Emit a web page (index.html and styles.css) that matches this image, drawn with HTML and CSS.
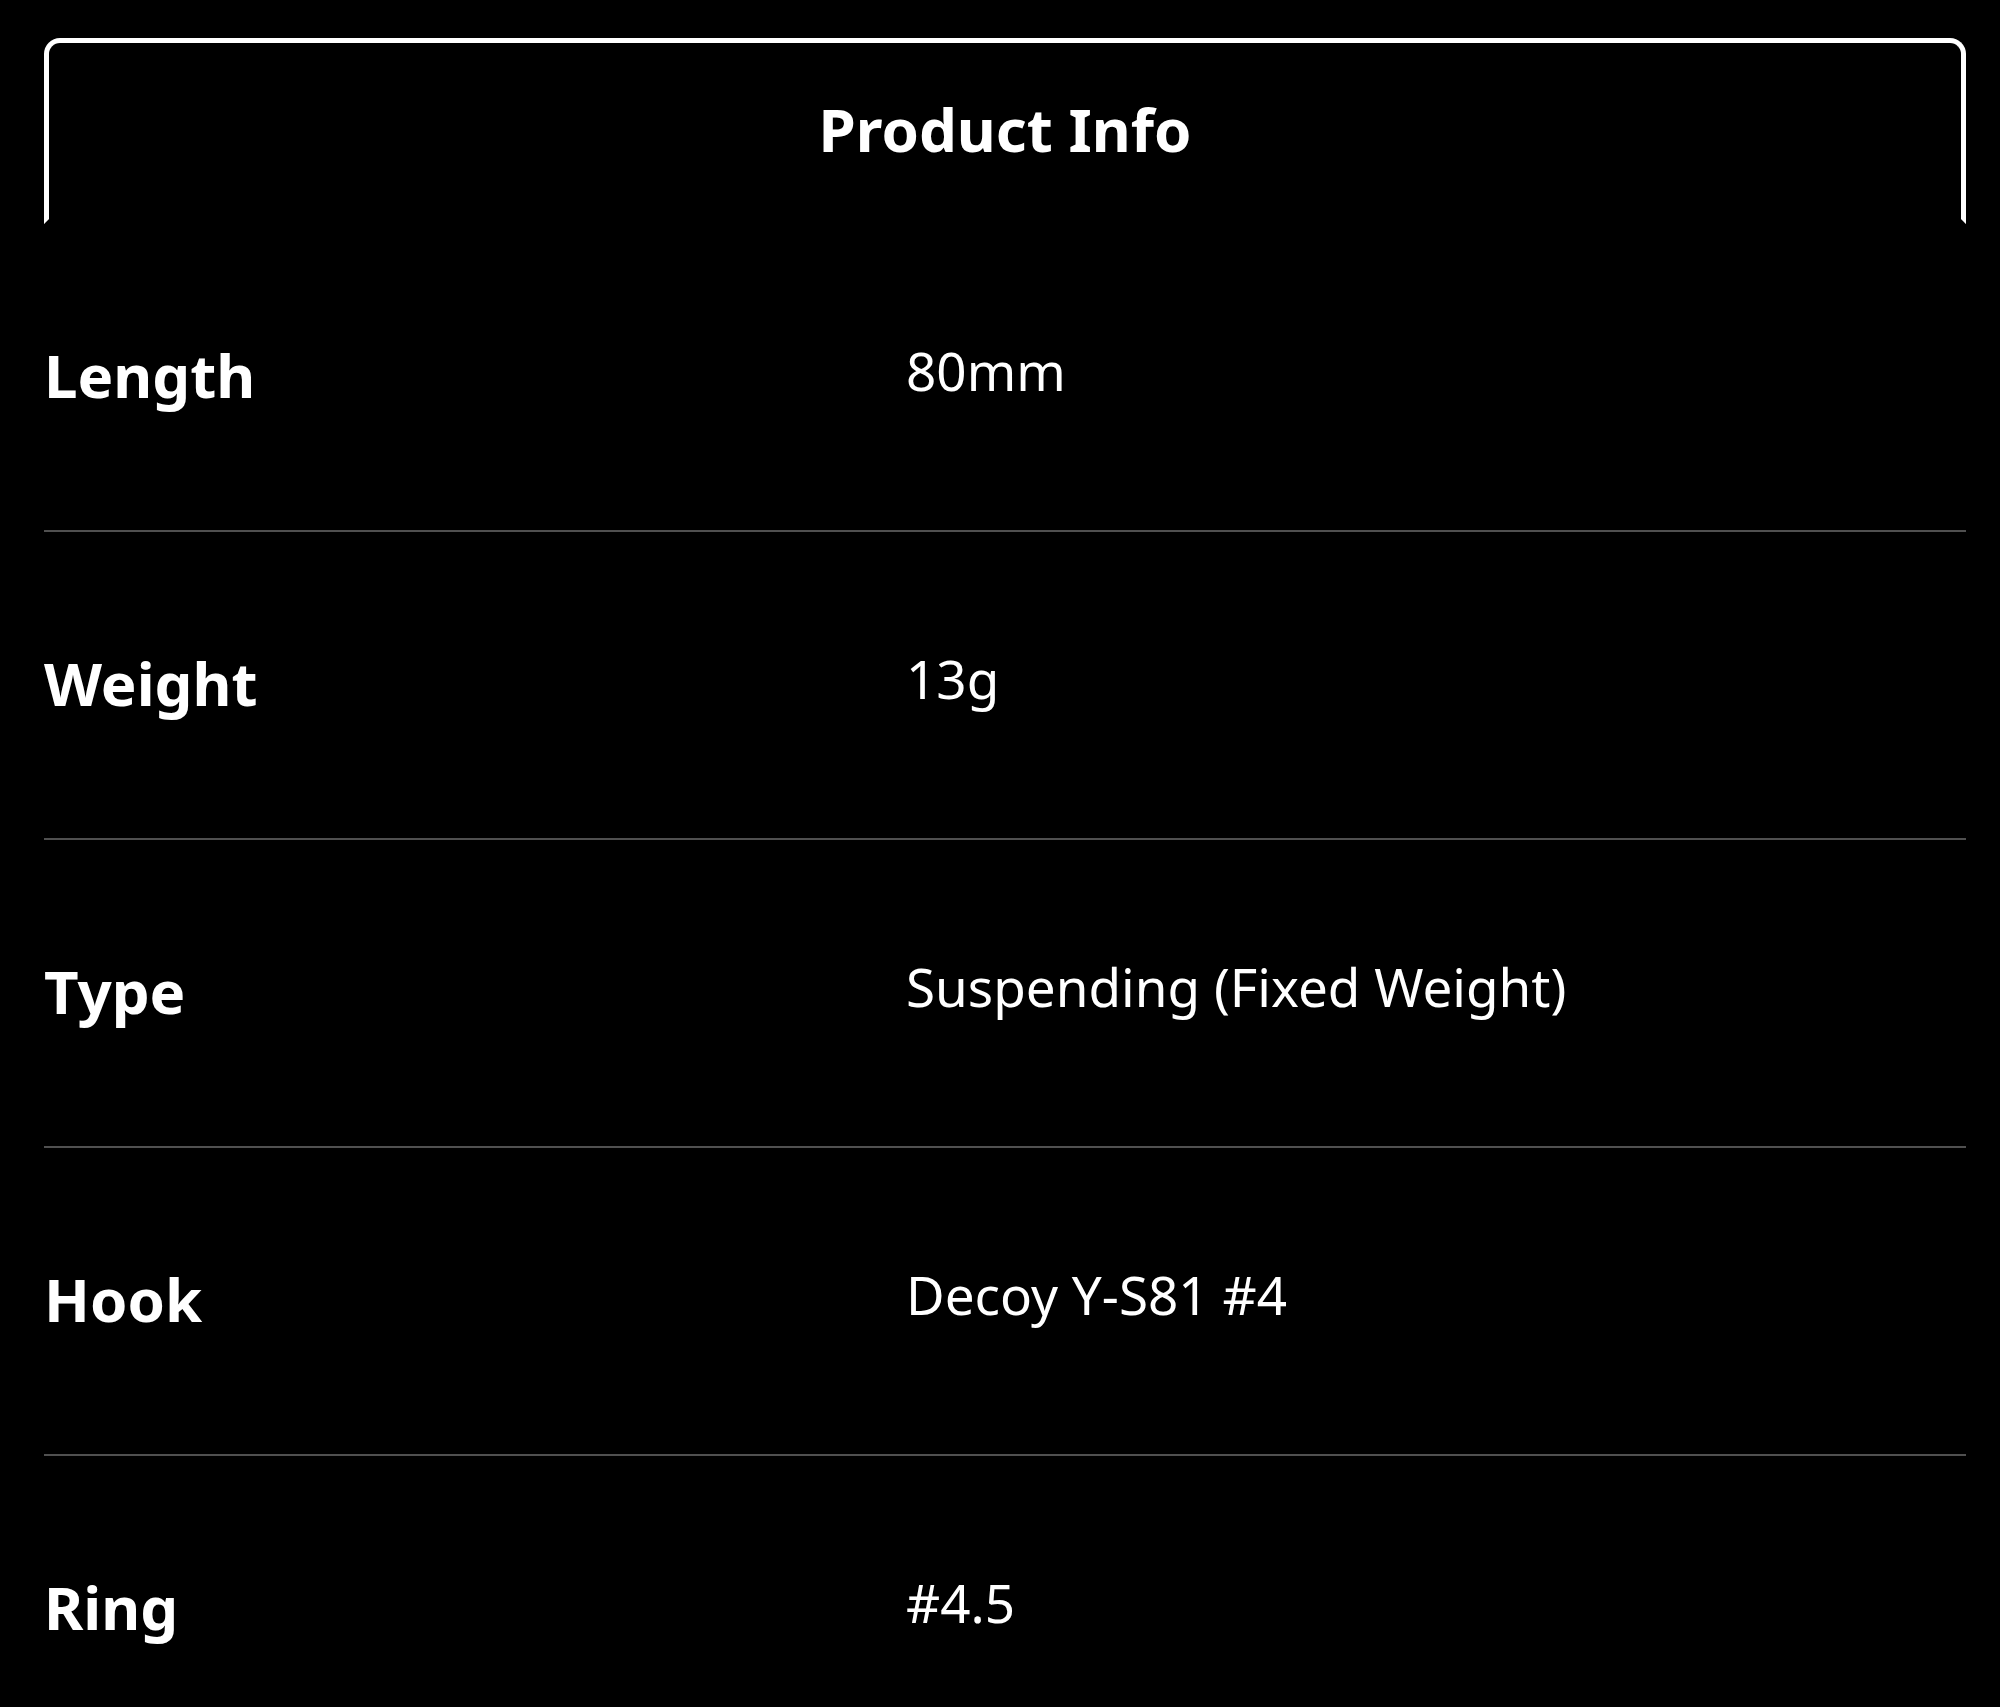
FILE: index.html
```html
<!DOCTYPE html>
<html lang="en">
<head>
    <meta charset="UTF-8">
    <meta name="viewport" content="width=device-width, initial-scale=1.0">
    <title>Product Info</title>
    <link rel="stylesheet" href="styles.css">
</head>
<body>
    <div class="product-info">
        <div class="info-header">
            <h2>Product Info</h2>
        </div>
        <div class="info-table">
            <div class="info-row">
                <span class="info-label">Length</span>
                <span class="info-value">80mm</span>
            </div>
            <div class="info-row">
                <span class="info-label">Weight</span>
                <span class="info-value">13g</span>
            </div>
            <div class="info-row">
                <span class="info-label">Type</span>
                <span class="info-value">Suspending (Fixed Weight)</span>
            </div>
            <div class="info-row">
                <span class="info-label">Hook</span>
                <span class="info-value">Decoy Y-S81 #4</span>
            </div>
            <div class="info-row">
                <span class="info-label">Ring</span>
                <span class="info-value">#4.5</span>
            </div>
        </div>
    </div>
</body>
</html>
```

FILE: styles.css
```css
/* Global styles */
body {
    margin: 0;
    padding: 0;
    background: #000;
    color: #fff;
    font-family: 'Noto Sans', 'Open Sans', sans-serif;
}

/* Wrapper */
.product-info {
    width: 1922px;
    margin-left: 44px;
    padding-top: 38px;
}

/* Header tab */
.info-header {
    height: 176px;
    border: 5px solid #fff;
    border-bottom-color: transparent;
    border-radius: 16px 16px 0 0;
    display: flex;
    justify-content: center;
    align-items: center;
}

.info-header h2 {
    margin: 0 0 5px;
    font-size: 60px;
    font-weight: 700;
    line-height: 1;
}

/* Spec rows */
.info-row {
    height: 306px;
    display: flex;
    align-items: center;
    border-bottom: 2px solid #505050;
}

.info-row:last-child {
    border-bottom: none;
}

.info-label {
    width: 862px;
    font-size: 60px;
    font-weight: 700;
    padding-bottom: 4px;
}

.info-value {
    font-size: 53px;
    padding-bottom: 14px;
}
```
